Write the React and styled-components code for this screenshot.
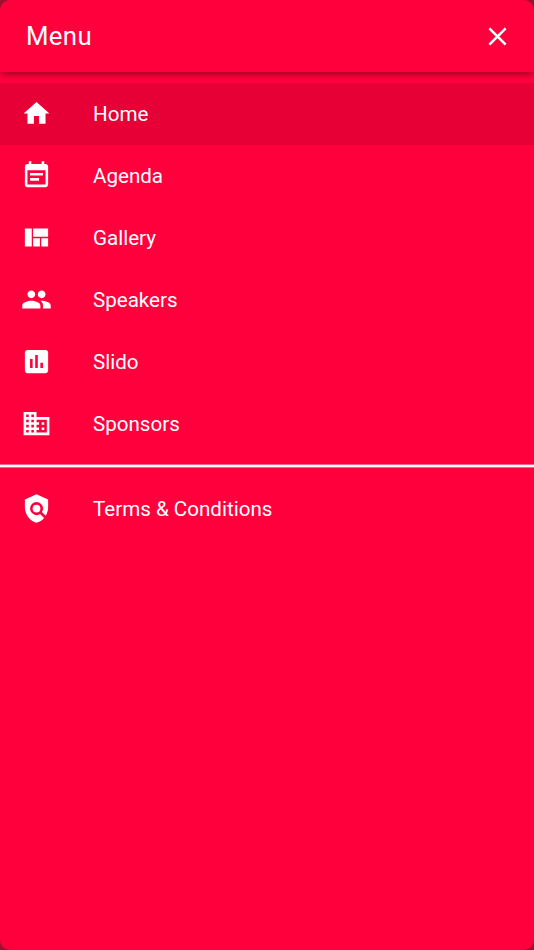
import React from "react"
import styled, { createGlobalStyle } from "styled-components"
import {
  MdAssessment,
  MdBusiness,
  MdClose,
  MdEventNote,
  MdHome,
  MdPeople,
  MdPolicy,
  MdViewQuilt,
} from "react-icons/md"

const GlobalStyle = createGlobalStyle`
  body {
    margin: 0;
    background: #9c112e;
  }

  * {
    box-sizing: border-box;
  }
`

const Drawer = styled.aside`
  display: flex;
  flex-direction: column;
  height: 100vh;
  overflow: hidden;
  border-radius: 10px;
  background: #ff003c;
  color: #fff;
  font-family: Roboto, sans-serif;
`

const Header = styled.header`
  display: flex;
  flex: none;
  align-items: center;
  justify-content: space-between;
  height: 72.3px;
  padding: 0 21px 0 26px;
  box-shadow: 0 2.6px 5.2px -1.3px rgba(0, 0, 0, 0.24),
    0 5.2px 6.5px -2px rgba(0, 0, 0, 0.16),
    0 1.3px 8px rgba(0, 0, 0, 0.1);
`

const Title = styled.h1`
  margin: 0;
  font-size: 25.8px;
  font-weight: 400;
  line-height: 32px;
  letter-spacing: 0.32px;
`

const CloseButton = styled.button`
  display: flex;
  padding: 0;
  border: 0;
  background: none;
  color: inherit;
  font-size: 31px;
  cursor: pointer;
`

const List = styled.ul`
  margin: 0;
  padding: ${props => props.$top} 0 9.8px;
  list-style: none;
`

const Item = styled.li`
  display: flex;
  align-items: center;
  gap: 41.4px;
  height: 61.92px;
  padding-left: 20.6px;
  background: ${props => (props.$active ? "#e60036" : "transparent")};
  cursor: pointer;

  svg {
    flex: none;
    width: 31px;
    height: 31px;
  }
`

const Label = styled.span`
  padding-top: 0.8px;
  font-size: 20.58px;
  line-height: 28px;
`

const Divider = styled.hr`
  flex: none;
  width: 100%;
  height: 4px;
  margin: 0;
  border: solid rgba(255, 255, 255, 0.4);
  border-width: 1px 0;
  background: #fff;
  background-clip: padding-box;
`

const pages = [
  { label: "Home", icon: MdHome },
  { label: "Agenda", icon: MdEventNote },
  { label: "Gallery", icon: MdViewQuilt },
  { label: "Speakers", icon: MdPeople },
  { label: "Slido", icon: MdAssessment },
  { label: "Sponsors", icon: MdBusiness },
]

const App = () => (
  <>
    <GlobalStyle />
    <Drawer>
      <Header>
        <Title>Menu</Title>
        <CloseButton aria-label="Close">
          <MdClose />
        </CloseButton>
      </Header>
      <nav>
        <List $top="10.4px">
          {pages.map(({ label, icon: Icon }) => (
            <Item key={label} $active={label === "Home"}>
              <Icon />
              <Label>{label}</Label>
            </Item>
          ))}
        </List>
        <Divider />
        <List $top="9.3px">
          <Item>
            <MdPolicy />
            <Label>Terms &amp; Conditions</Label>
          </Item>
        </List>
      </nav>
    </Drawer>
  </>
)

export default App
